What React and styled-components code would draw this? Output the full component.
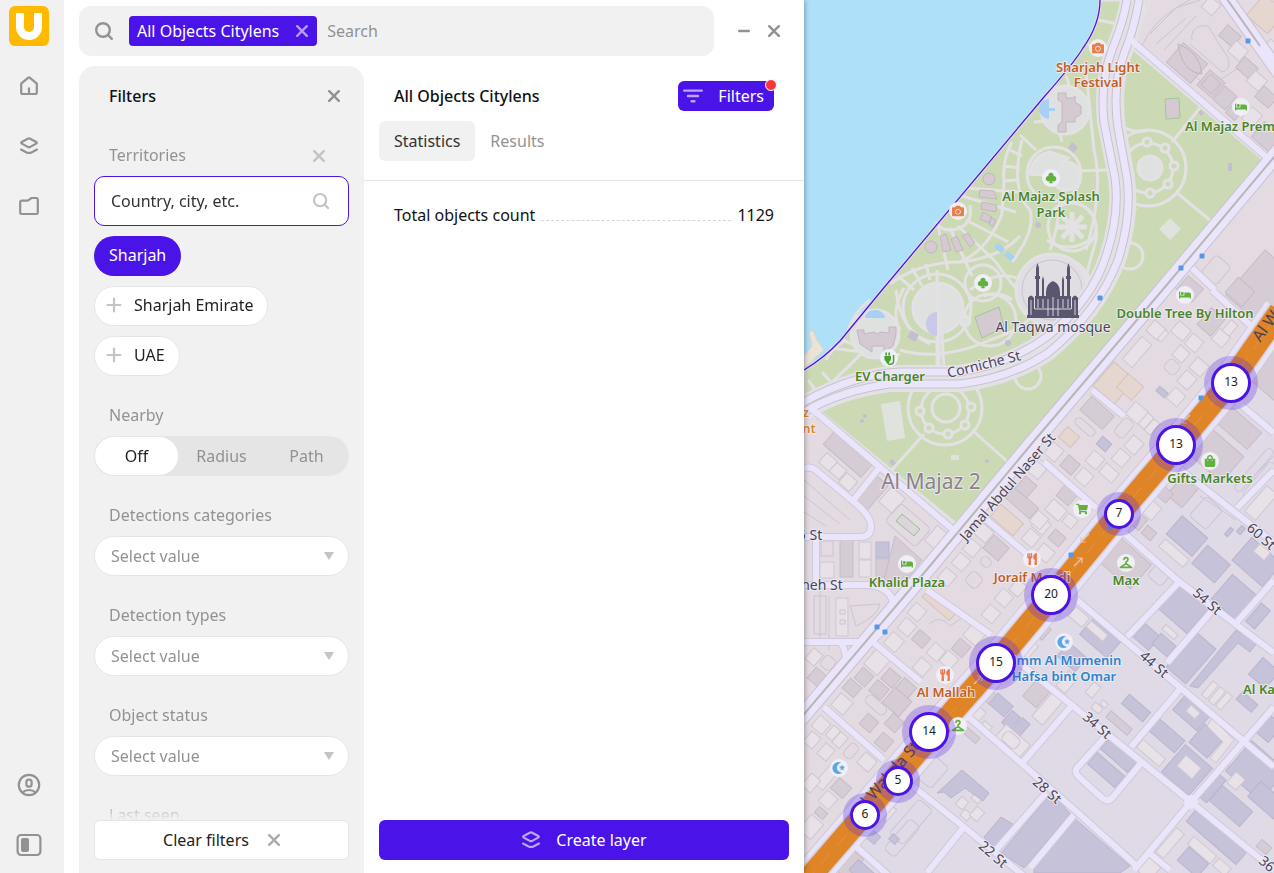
import React from "react";
import styled, { createGlobalStyle } from "styled-components";
import { FaBed, FaCamera, FaShoppingBag, FaShoppingCart, FaUtensils } from "react-icons/fa";
import { BsSuitClubFill } from "react-icons/bs";

const purple = "#4a14e8";
const gray = "#929292";
const ANGLE = -49;

// ---------- icons ----------

const Cross = ({ color = gray, size = 12, width = 2.4 }) => (
  <svg width={size} height={size} viewBox="0 0 12 12" fill="none" stroke={color} strokeWidth={width} strokeLinecap="round">
    <path d="M1.2 1.2 10.8 10.8M10.8 1.2 1.2 10.8" />
  </svg>
);

const Minus = () => (
  <svg width="12" height="12" viewBox="0 0 12 12" stroke={gray} strokeWidth="2.4" strokeLinecap="round">
    <path d="M1.2 6H10.8" />
  </svg>
);

const Plus = () => (
  <svg width="16" height="16" viewBox="0 0 16 16" stroke="#c4c4c4" strokeWidth="2.2" strokeLinecap="round">
    <path d="M1.500 8H14.500M8 1.500V14.500" />
  </svg>
);

const Magnifier = ({ color = gray, size = 20, width = 2.4 }) => (
  <svg width={size} height={size} viewBox="0 0 20 20" fill="none" stroke={color} strokeWidth={width} strokeLinecap="round">
    <circle cx="9" cy="9" r="6.8" />
    <path d="M14 14 17.8 17.8" />
  </svg>
);

const HomeIcon = () => (
  <svg width="20" height="20" viewBox="0 0 20 20" fill="none" stroke={gray} strokeWidth="2.2" strokeLinejoin="round">
    <path d="M2.2 7.6 9 1.8Q10 1 11 1.8L17.8 7.6V16.5Q17.8 18 16.3 18H3.7Q2.2 18 2.2 16.5ZM10 11.5V18" />
  </svg>
);

const LayersIcon = ({ color = gray }) => (
  <svg width="20" height="20" viewBox="0 0 20 20" fill="none" stroke={color} strokeWidth="2.2" strokeLinejoin="round" strokeLinecap="round">
    <path d="M8.8 2.7Q10 2.1 11.2 2.7L17.2 6Q18.4 6.8 17.2 7.6L11.2 10.9Q10 11.5 8.8 10.9L2.8 7.6Q1.6 6.8 2.8 6ZM2 13.600 7.6 16.400Q10 17.500 12.4 16.400L18 13.600" />
  </svg>
);

const FolderIcon = () => (
  <svg width="20" height="20" viewBox="0 0 20 20" fill="none" stroke={gray} strokeWidth="2.2" strokeLinejoin="round">
    <path d="M3 4.6H8.6L12.6 2H17.6Q18.8 2 18.8 3.4V16.6Q18.8 18 17.6 18H2.4Q1.200 18 1.200 16.6V6.6Q1.200 4.6 3 4.6Z" />
  </svg>
);

const UserIcon = () => (
  <svg width="24" height="24" viewBox="0 0 24 24" fill="none" stroke={gray} strokeWidth="2.2">
    <circle cx="12" cy="12" r="10.2" />
    <rect x="9.4" y="6.6" width="5.2" height="7" rx="2.4" />
    <path d="M5.4 19.6Q8 17 12 17T18.6 19.6" />
  </svg>
);

const PanelIcon = () => (
  <svg width="26" height="24" viewBox="0 0 26 24" fill="none" stroke={gray} strokeWidth="2.2">
    <rect x="1.6" y="2" width="22.8" height="20" rx="3.5" />
    <rect x="5" y="5" width="8" height="14" rx="2" fill={gray} stroke="none" />
  </svg>
);

const FunnelLines = () => (
  <svg width="20" height="14" viewBox="0 0 20 14" stroke="#bda6f7" strokeWidth="2.4" strokeLinecap="round">
    <path d="M1.2 1.6H18.8M5 7H15M8.6 12.2H11.4" />
  </svg>
);

const DownArrow = () => (
  <svg width="10" height="8" viewBox="0 0 10 8" fill="#c4c4c4">
    <path d="M0 0H10L5 8Z" />
  </svg>
);

// ---------- map data ----------

const COAST = "M1100 0Q1100 24 1083 48Q1074 63 1044 97L882 290L840 341Q824 358 804 370";

const tones = {
  p: ["#d6ccd5", "#c6bdc8"],
  l: ["#e8e1e8", "#cfc7d1"],
  v: ["#c6c2d9", "#b9b5ce"],
  o: ["#e6d6d0", "#d4c2bd"],
  n: ["none", "#cbc4d2"],
};

// centre x, centre y, length along the avenue, depth, tone
const buildings = [
  [1211, 6, 14, 14, "l"], [1230, 36, 14, 18, "p"], [1238, 51, 14, 16, "l"], [1247, 68, 14, 18, "p"], [1257, 81, 14, 16, "l"],
  [1266, 97, 14, 18, "p"], [1187, 63, 26, 32, "p"], [1211, 84, 20, 20, "p"], [1211, 84, 14, 14, "p"], [1225, 98, 18, 16, "p"],
  [1267, 137, 20, 24, "p"], [1252, 117, 16, 14, "l"], [1266, 14, 28, 28, "o"], [1234, 112, 12, 12, "p"], [1272, 48, 12, 14, "l"],
  [1216, 270, 24, 20, "n"], [1190, 289, 18, 20, "p"], [1262, 287, 60, 44, "p"], [1240, 292, 20, 22, "p"],
  [1211, 322, 22, 18, "p"], [1221, 338, 14, 14, "l"], [1230, 328, 14, 9, "l"], [1181, 331, 14, 16, "l"], [1194, 343, 14, 14, "l"],
  [1181, 354, 13, 13, "l"], [1199, 367, 14, 15, "l"], [1187, 380, 15, 14, "l"], [1172, 367, 13, 14, "n"], [1176, 397, 14, 14, "l"],
  [1162, 392, 6, 11, "v"], [1156, 330, 14, 15, "l"], [1163, 336, 12, 5, "l"], [1137, 352, 30, 13, "l"], [1114, 383, 32, 28, "o"],
  [1130, 387, 18, 20, "o"], [1097, 413, 18, 30, "p"], [1124, 428, 20, 12, "n"], [1085, 427, 8, 24, "n"], [1069, 437, 14, 16, "o"],
  [1104, 444, 10, 12, "v"], [1137, 413, 16, 17, "l"], [1146, 421, 15, 8, "l"], [1152, 427, 15, 8, "l"], [1134, 445, 15, 14, "l"],
  [1121, 458, 14, 14, "l"], [1095, 460, 14, 14, "l"], [1109, 473, 12, 17, "l"], [1084, 477, 14, 14, "l"], [1054, 452, 15, 14, "l"],
  [1070, 465, 14, 15, "p"], [1039, 468, 14, 14, "l"], [1067, 495, 15, 16, "p"], [1056, 510, 14, 18, "l"], [1070, 521, 11, 12, "l"],
  [1041, 525, 14, 15, "l"], [1057, 538, 12, 14, "p"], [1045, 553, 14, 15, "l"],
  [1275, 372, 44, 36, "p"], [1237, 426, 22, 46, "p"], [1216, 455, 34, 44, "p"], [1254, 470, 54, 8, "n"], [1259, 480, 44, 8, "n"],
  [1261, 503, 34, 14, "l"], [1184, 490, 30, 20, "p"], [1162, 492, 12, 20, "p"], [1206, 513, 26, 22, "n"], [1149, 508, 16, 20, "l"],
  [1137, 520, 14, 16, "p"], [1149, 533, 10, 12, "p"], [1125, 563, 32, 42, "p"], [1187, 536, 24, 34, "v"], [1174, 553, 10, 32, "l"],
  [1211, 564, 24, 30, "v"], [1257, 562, 30, 40, "v"], [1262, 552, 10, 14, "l"], [1159, 575, 16, 18, "n"], [1229, 532, 9, 4, "v"], [1241, 530, 8, 5, "v"],
  [1184, 607, 36, 40, "v"], [1147, 637, 18, 20, "v"], [1164, 645, 14, 20, "v"], [1170, 632, 6, 16, "l"], [1234, 597, 32, 32, "v"],
  [1258, 616, 24, 12, "v"], [1191, 658, 46, 26, "v"], [1264, 673, 22, 22, "v"], [1247, 702, 10, 20, "v"], [1101, 637, 24, 36, "v"],
  [1097, 631, 8, 22, "l"], [1079, 617, 12, 18, "l"], [1041, 630, 14, 15, "p"], [1072, 657, 18, 24, "v"], [1067, 682, 20, 12, "l"],
  [1093, 690, 14, 9, "l"], [1097, 708, 7, 10, "l"], [1104, 704, 5, 7, "l"], [1136, 708, 12, 28, "v"], [1119, 723, 8, 28, "p"],
  [1049, 707, 36, 14, "l"], [1038, 692, 26, 18, "p"], [1210, 690, 18, 7, "l"], [1217, 696, 18, 7, "l"], [1224, 701, 18, 7, "l"],
  [1192, 712, 22, 32, "v"], [1193, 712, 8, 12, "l"], [1166, 735, 16, 36, "v"], [1206, 741, 24, 24, "v"], [1151, 753, 10, 30, "l"],
  [1187, 770, 36, 36, "v"], [1189, 767, 14, 20, "l"], [1119, 755, 15, 36, "v"], [1106, 770, 15, 36, "v"], [1239, 758, 26, 9, "l"],
  [1256, 771, 40, 46, "v"], [1236, 781, 14, 12, "l"], [1211, 787, 30, 14, "v"], [1231, 806, 20, 40, "v"], [1267, 800, 20, 34, "v"],
  [1267, 727, 22, 22, "v"], [1217, 836, 18, 66, "v"], [1170, 843, 32, 10, "l"], [1202, 850, 10, 30, "l"], [1193, 862, 18, 26, "v"],
  [1222, 867, 10, 16, "l"], [1264, 847, 9, 13, "p"], [1149, 869, 18, 16, "l"],
  [917, 612, 14, 14, "l"], [907, 627, 14, 14, "l"], [921, 639, 13, 14, "p"], [894, 642, 15, 15, "l"], [939, 605, 10, 36, "o"],
  [936, 652, 14, 14, "l"], [922, 667, 14, 14, "l"], [961, 648, 14, 14, "p"], [974, 635, 15, 17, "l"], [949, 660, 14, 14, "l"],
  [1004, 598, 14, 14, "l"], [991, 614, 14, 14, "l"], [1018, 588, 14, 12, "l"], [877, 662, 20, 18, "l"], [864, 677, 14, 14, "p"],
  [891, 678, 14, 15, "p"], [879, 690, 14, 15, "p"], [852, 688, 13, 15, "p"], [842, 704, 16, 16, "l"], [906, 688, 14, 16, "p"],
  [897, 702, 20, 22, "p"], [869, 723, 14, 14, "p"], [894, 723, 14, 14, "p"], [884, 742, 14, 14, "p"], [821, 725, 14, 14, "l"],
  [833, 733, 13, 9, "l"], [840, 740, 14, 10, "l"], [812, 740, 14, 12, "l"], [826, 752, 14, 12, "l"], [867, 762, 14, 15, "l"],
  [851, 751, 16, 10, "n"], [876, 705, 10, 24, "n"], [827, 777, 26, 11, "l"], [841, 788, 14, 16, "p"], [828, 800, 14, 14, "l"],
  [811, 783, 16, 12, "l"], [821, 813, 8, 11, "p"], [811, 827, 20, 16, "l"], [817, 677, 14, 14, "p"], [828, 663, 13, 13, "n"], [814, 657, 14, 12, "l"],
  [1031, 632, 14, 14, "p"], [1028, 648, 16, 14, "l"], [1001, 705, 14, 20, "v"], [1011, 720, 16, 11, "v"], [1021, 727, 16, 10, "v"],
  [976, 713, 14, 15, "l"], [971, 735, 7, 18, "p"], [986, 727, 8, 10, "l"], [1011, 743, 22, 32, "l"], [1011, 740, 12, 18, "n"], [987, 695, 12, 14, "p"],
  [977, 798, 8, 9, "l"], [962, 803, 10, 9, "l"], [966, 815, 8, 9, "l"], [977, 814, 12, 10, "l"], [911, 822, 46, 18, "n"], [902, 838, 40, 14, "n"],
  [930, 770, 28, 26, "n"], [847, 862, 26, 22, "p"], [894, 839, 7, 8, "v"], [872, 836, 10, 14, "v"], [887, 812, 16, 12, "l"], [862, 872, 14, 22, "v"],
  [848, 454, 18, 50, "p"], [828, 462, 13, 14, "l"], [838, 471, 12, 13, "l"], [848, 482, 13, 14, "l"], [871, 492, 32, 18, "p"],
  [892, 500, 20, 18, "l"], [937, 538, 20, 16, "l"], [908, 525, 24, 40, "n"],
  [1007, 520, 16, 30, "o"], [1022, 503, 14, 32, "p"], [1026, 487, 16, 15, "p"], [1037, 470, 14, 14, "l"], [984, 533, 14, 15, "l"],
  [996, 548, 17, 20, "p"], [972, 548, 14, 14, "l"], [961, 562, 14, 14, "l"], [947, 577, 14, 14, "l"], [1031, 538, 14, 14, "l"],
  [1039, 520, 14, 14, "l"], [986, 562, 9, 11, "n"], [974, 580, 14, 14, "n"],
];

// blocks that line up with the screen: x, y, width, height, tone
const uprights = [
  [840, 540, 13, 37, "p"], [859, 542, 12, 17, "l"], [859, 560, 12, 17, "l"], [876, 542, 13, 16, "v"], [876, 559, 13, 18, "p"],
  [821, 541, 12, 15, "n"], [820, 562, 14, 16, "l"], [836, 598, 12, 38, "l"], [814, 596, 12, 38, "n"], [840, 610, 5, 4, "n"], [840, 620, 5, 4, "n"],
];

const industrial = [
  "1190,686 1236,630 1257,643 1250,652 1238,643 1198,688",
  "937,793 962,770 989,793 983,801 965,788 951,798 944,792",
  "984,837 1001,817 1016,826 996,850",
  "1001,853 1052,792 1070,814 1024,868",
  "1074,818 1130,866 1120,873 1034,873 1034,866",
];

const streets = [
  "M1131 40 1272 162", "M811 408 958 534", "M987 520 1034 560", "M804 468Q812 466 818 472L854 502Q871 516 871 526Q871 537 860 537H804",
  "M852 502 879 468", "M816 540V582", "M804 585H870Q893 588 894 608", "M804 642H871L884 630", "M841 643Q846 650 846 662",
  "M874 643 921 682", "M824 707 884 760", "M927 590 991 635", "M1092 390 1124 416", "M1044 462 1096 508", "M1212 290 1250 325",
  "M1181 470 1274 543", "M1241 405 1274 433", "M1237 508 1274 470", "M1124 533 1177 580 1274 653", "M1077 600 1274 767",
  "M1010 655 1191 802 1274 870", "M964 713 1077 812 1139 868", "M914 787 964 827 1024 876", "M851 842 889 876",
  "M1127 637 1181 580", "M1167 663 1211 612", "M1237 622 1274 580", "M1131 747 1181 688", "M1274 707 1191 802 1134 870",
  "M1074 703 1023 762", "M1074 815 1030 868", "M1104 738 1077 768Q1074 772 1078 776L1102 798Q1108 803 1113 797L1142 762",
  "M1046 793 996 850", "M964 827 927 873", "M1149 853 1170 870", "M1192 268 1215 290",
];

const cornicheWest = "M1127 0Q1124 20 1112 50Q1100 82 1104 122L1115 178Q1120 215 1106 256Q1092 300 1048 336Q1010 364 960 372H900Q852 375 804 402";
const cornicheEast = "M1139 0Q1134 30 1124 54Q1112 86 1118 128L1127 178Q1132 216 1118 260Q1098 312 1048 353Q1010 378 960 384H890Q842 390 804 412";
const jamal = "M1280 150 1165 287 1034 441 924 573 800 719";
const wahda = "M790 900 865 813 932 735 996 663 1051 597 1119 514 1176 447 1231 381 1280 311";

const parkPaths = [
  "M1098 20 1118 24", "M1088 44 1112 62", "M1066 76Q1070 84 1068 92", "M1085 62Q1090 110 1094 150Q1104 190 1086 250",
  "M1020 135 1036 150M1034 122Q1058 118 1062 142M1012 142Q1002 160 1004 182L1002 214Q988 250 960 262",
  "M1022 140Q1010 190 1030 210Q1036 230 1012 262", "M966 188 1018 192M962 196 1016 212M966 220 1008 242M950 228 972 276M938 226 948 270M958 226 996 262",
  "M970 205Q974 228 950 230Q940 230 936 222", "M890 284Q920 262 960 262Q1000 258 1020 236", "M1010 150 1022 156M1004 166 1020 168M1003 181 1018 180",
  "M898 276 914 290M912 268 922 286M926 264 930 280", "M1034 172 1110 170", "M1060 200Q1058 230 1050 250", "M1074 202Q1100 210 1096 240L1086 276",
  "M830 348 862 352Q860 356 832 382M822 372 836 388M808 380 820 396M842 340 858 346", "M900 350Q940 362 990 340Q1020 330 1030 318M896 290Q900 330 930 344",
  "M937 270V282M942 334 944 370M904 288Q890 312 900 330", "M970 290Q1000 268 1020 280M1012 300Q1000 290 984 296M996 262Q1008 280 1016 288",
  "M1172 142 1200 108M1176 192 1211 221M1126 128Q1136 134 1148 130M1136 208 1128 220", "M924 434 890 472M972 430 1008 462",
  "M1050 214Q1064 196 1078 204M1047 240Q1070 256 1096 236M1060 256Q1084 262 1090 280",
  "M860 346Q880 362 900 354M846 340Q830 350 826 360M870 300Q856 310 848 330",
];

const knots = [
  [1147, 142], [1165, 148], [1174, 166], [1168, 184], [1150, 193], [920, 411], [929, 428], [948, 434], [965, 425], [971, 407],
];

const stops = [[1248, 41], [1202, 256], [1181, 268], [1100, 298], [1201, 398], [1110, 527], [1071, 555], [877, 627], [885, 632]];

const green = "#62b13c";
const pois = [
  [1098, 48, FaCamera, "#e8804c"], [958, 211, FaCamera, "#e8804c"],
  [1051, 178, BsSuitClubFill, green], [983, 283, BsSuitClubFill, green],
  [1241, 107, FaBed, green], [1185, 295, FaBed, green], [907, 564, FaBed, green],
  [1032, 559, FaUtensils, "#ea7a4a"], [945, 675, FaUtensils, "#ea7a4a"],
  [1210, 461, FaShoppingBag, green], [1082, 509, FaShoppingCart, green],
];

const food = "#c45f22";
const leaf = "#4a8526";
const street = "#4a4458";
const places = [
  [1098, 72, "Sharjah Light", food], [1098, 87, "Festival", food], [1230, 131, "Al Majaz Prem", leaf],
  [1051, 201, "Al Majaz Splash", leaf], [1051, 217, "Park", leaf], [1185, 318, "Double Tree By Hilton", leaf],
  [890, 381, "EV Charger", leaf], [1210, 483, "Gifts Markets", leaf], [907, 587, "Khalid Plaza", leaf],
  [1126, 585, "Max", leaf], [1032, 582, "Joraif Mandi", food], [946, 697, "Al Mallah", food],
  [1064, 665, "Umm Al Mumenin", "#2b84cc"], [1064, 681, "Hafsa bint Omar", "#2b84cc"], [1259, 694, "Al Ka", leaf],
  [806, 417, "z", "#d98a2b"], [809, 433, "nt", "#d98a2b"],
];

const streetNames = [
  [985, 369, "Corniche St", -14], [1011, 490, "Jamal Abdul Naser St", ANGLE], [1258, 540, "60 St", 41], [1204, 605, "54 St", 41],
  [1151, 668, "44 St", 41], [1094, 729, "34 St", 41], [1044, 794, "28 St", 41], [990, 858, "22 St", 41], [1270, 873, "36 St", 41],
  [810, 540, "5 St", 0], [822, 590, "neh St", 0], [891, 781, "Al Wahda St", ANGLE, true], [1281, 314, "Al Wahda", -54, true],
];

const clusters = [[1231, 383, 13], [1176, 445, 13], [1119, 514, 7], [1051, 595, 20], [996, 663, 15], [929, 732, 14], [898, 781, 5], [865, 815, 6]];

const MAP_LEFT = 804;

const Hanger = ({ x, y }) => (
  <g transform={`translate(${x} ${y})`} fill="none" stroke={green} strokeWidth="1.6" strokeLinecap="round" strokeLinejoin="round">
    <path d="M-2-3.5Q-2-5.4 0-5.4T2-3.4Q2-2 0-1V.6L-5.6 4.4H5.6L0 .6" />
  </g>
);

const Crescent = ({ x, y }) => (
  <g transform={`translate(${x} ${y})`} fill="#5aa6ea">
    <path d="M2.2-5.2A6 6 0 1 0 3.4 4.6A4.8 4.8 0 1 1 2.2-5.2Z" />
    <path d="M3-3.6 3.9-1.4 6.2-1.3 4.4.2 5 2.4 3 1.2 1.2 2.4 1.8.2 0-1.3 2.2-1.4Z" />
  </g>
);

const ChargerPlug = ({ x, y }) => (
  <g transform={`translate(${x} ${y})`}>
    <path d="M-4.6-2H2V1Q2 3 .2 3.4V5H-2.8V3.4Q-4.6 3-4.6 1ZM-3.6-5.4H-2V-2.6H-3.6ZM-.6-5.4H1V-2.6H-.6Z" fill="#4aa02a" />
    <path d="M-1.2 4.6Q-1.2 6.4 1.2 6.2Q4.6 6.2 4.6 3V-3" fill="none" stroke="#4aa02a" strokeWidth="1.4" />
  </g>
);

const Mosque = () => (
  <g fill="#5b5670">
    <path d="M1036 268 1037.5 263 1039 268V276H1040V279H1039V296H1036V279H1035V276H1036ZM1067 268 1068.5 263 1070 268V276H1071V279H1070V296H1067V279H1066V276H1067Z" />
    <path d="M1042 280 1043 276 1044 280V300H1042ZM1062 280 1063 276 1064 280V300H1062ZM1046 292Q1046 284 1053 281Q1060 284 1060 292V300H1046Z" />
    <path d="M1028 298Q1031 293 1034 298V316H1028ZM1072 298Q1075 293 1078 298V316H1072ZM1035 296H1071V310H1035ZM1034 309H1072V317H1034Z" />
    <path d="M1027 315H1079V318H1027Z" />
    <path d="M1031 300V315M1038 299V308M1043 299V308M1048 299V316M1053 297V316M1058 299V316M1063 299V308M1068 299V308M1075 300V315M1035 309H1071" stroke="#d8d3df" strokeWidth="1" fill="none" />
  </g>
);

const Park = () => (
  <g>
    <path d="M1100 0Q1100 24 1083 48Q1074 63 1044 97L882 290L840 341Q824 358 804 370V400L818 410 956 524 1264 160 1132 48 1150 0Z" fill="#cbdab4" stroke="#e4e0e6" strokeWidth="3" />
    <path d="M809 332 813 330 817 340 824 350 812 361 804 368V356L812 346Z" fill="#ebe3d6" stroke="#ddd2c2" />
    <g fill="none" stroke="#e4e1e4" strokeWidth="3">
      {parkPaths.map((d) => <path key={d} d={d} />)}
      <circle cx="1148" cy="168" r="38" />
      <circle cx="945" cy="408" r="37" />
      <circle cx="1130" cy="256" r="13" />
      <circle cx="1028" cy="376" r="13" />
      <circle cx="1054" cy="174" r="27" />
      <circle cx="1072" cy="227" r="24" />
      <circle cx="983" cy="283" r="18" />
      <circle cx="937" cy="308" r="34" />
      <circle cx="990" cy="320" r="26" />
      <circle cx="1148" cy="168" r="25" />
      <circle cx="945" cy="410" r="24" />
      <path d="M1072 212V242M1057 227H1087M1062 216 1083 238M1083 216 1062 238" strokeWidth="5" />
    </g>
    <g fill="#dfe1e0" stroke="#e4e1e4" strokeWidth="3">
      <circle cx="1065" cy="110" r="24" />
      <circle cx="875" cy="334" r="24" />
      <circle cx="938" cy="308" r="25" />
      <circle cx="1150" cy="168" r="12" />
      <circle cx="1066" cy="176" r="14" />
      <path d="M1030 174Q1032 156 1050 152L1068 158 1060 166 1056 176Z" />
      <circle cx="1052" cy="290" r="36" fill="#e0dde3" />
      <circle cx="965" cy="321" r="5" />
    </g>
    <circle cx="1052" cy="290" r="30" fill="none" stroke="#c9c3cf" />
    <path d="M938 282V370" stroke="#e4e1e4" strokeWidth="5" />
    <circle cx="946" cy="408" r="14" fill="#cbdab4" stroke="#e4e1e4" strokeWidth="3" />
    {knots.map(([x, y]) => <circle key={x + "-" + y} cx={x} cy={y} r="4" fill="#cbdab4" stroke="#e4e1e4" strokeWidth="3" />)}
    <path d="M937 312A11 12 0 0 0 937 336Z" fill="#cac8e8" />
    <path d="M1049 99A10 10 0 0 0 1049 119V111H1055V108H1049ZM865 318A10 8 0 0 1 885 318Z" fill="#a8cff5" />
    <path d="M994 247 998 243 1005 249 1001 253ZM1004 255 1008 251 1015 257 1011 261Z" fill="#a8cff5" />
    <g fill="#d5c9d2" stroke="#c3b6c1">
      <path d="M1058 93H1066V98H1073L1075 96V102L1081 106V114L1075 118V122H1066V132H1058V125L1062 122V102L1058 100Z" />
      <path d="M857 330H864V334L874 332 877 334 881 332 889 333V327H896V334L893 346 884 352V346H872V352L860 344Z" />
      <circle cx="989" cy="179" r="6" />
      <circle cx="931" cy="247" r="6" />
      <path d="M980 190 994 191 997 199 979 197ZM982 202 997 205 996 212 981 209ZM983 212 992 217 989 223 980 219ZM940 236 946 234 951 250 943 252ZM951 239 957 236 963 250 956 252ZM962 236 968 233 975 243 970 247ZM991 218 996 220 993 227 989 224Z" />
      <path d="M975 317 999 307 1004 327 982 338Z" stroke="#9fc79a" />
      <path d="M1165 99 1179 98 1180 118 1166 119Z" stroke="#9fc79a" />
    </g>
    <path d="M881 404 900 401 905 438 887 441ZM1170 218 1181 229 1170 240 1159 229ZM951 455H959V460H951Z" fill="#dfe2dd" />
    <path d="M1072 142 1078 147 1074 153 1068 148ZM911 330 919 335 915 342 907 337ZM1228 163H1232V171H1228ZM1201 110 1204 113 1201 116 1198 112ZM892 459 896 463 893 466 889 462Z" fill="#c3bfce" />
    <g fill="#c3bfce">
      <circle cx="1038" cy="225" r="3" />
      <circle cx="865" cy="416" r="2" />
      <circle cx="862" cy="421" r="2" />
      <circle cx="987" cy="461" r="2" />
      <circle cx="1008" cy="343" r="3" />
    </g>
  </g>
);

const CityMap = () => (
  <MapArt role="img" aria-label="Map of Sharjah">
    <g transform={`translate(${-MAP_LEFT} 0)`}>
      <rect x="804" width="3000" height="2000" fill="#e4dbe2" />
      <path d="M790 900 1280 311H3000V2000H790Z" fill="#dfdae6" />
      <path d={COAST + "V0Z"} fill="#afe0f9" />
      <Park />
      <g fill="none" stroke="#cbc5d2">
        <path d="M1140 52Q1150 20 1190 0M1150 34 1176 8 1200 0M1156 44 1186 18M1164 50 1196 16M1192 40Q1190 30 1200 26H1208L1228 58Q1232 70 1222 72L1190 44M1220 80 1250 60M1180 62 1232 110" />
        <path d="M804 480 850 520M804 496 840 524M804 512 826 526M850 606 880 604Q878 616 856 626ZM929 624Q940 614 950 626L968 614M820 590V640M829 596V650" />
        <path d="M1250 480 1274 456M1200 496 1236 520" />
      </g>
      {buildings.map(([x, y, w, h, tone], i) => (
        <rect key={i} x={x - w / 2} y={y - h / 2} width={w} height={h} rx={tone === "n" ? 4 : 0} fill={tones[tone][0]} stroke={tones[tone][1]} transform={`rotate(${ANGLE} ${x} ${y})`} />
      ))}
      {uprights.map(([x, y, w, h, tone], i) => (
        <rect key={i} x={x} y={y} width={w} height={h} fill={tones[tone][0]} stroke={tones[tone][1]} />
      ))}
      {industrial.map((points) => <polygon key={points} points={points} fill={tones.v[0]} stroke={tones.v[1]} />)}
      <path d="M1178 44Q1200 52 1202 74Q1182 72 1178 44Z" fill="none" stroke="#bfb5bf" />
      <path d="M895 536 922 560 906 580H884Z" fill={tones.p[0]} stroke={tones.p[1]} />
      <path d="M902 514 920 529 914 536 896 521Z" fill="#dcd6dc" stroke="#94bf90" />
      <path d="M1212 718 1234 740 1216 763 1210 758 1223 742 1207 726Z" fill="#e8e1e8" stroke="#cfc7d1" />

      <g fill="none" strokeLinejoin="round">
        {streets.map((d) => <path key={d} d={d} stroke="#cfc9d9" strokeWidth="8" />)}
        <path d={jamal} stroke="#c8c2d2" strokeWidth="17" />
        <path d="M1222 -8 1280 74" stroke="#c8c2d2" strokeWidth="15" />
        <path d={cornicheWest} stroke="#e4e0e8" strokeWidth="14" />
        <path d={cornicheEast} stroke="#e4e0e8" strokeWidth="16" />
        <path d={cornicheWest} stroke="#c6c3c8" strokeWidth="9" />
        <path d={cornicheEast} stroke="#c6c3c8" strokeWidth="9" />
        <path d={wahda} stroke="#cfc9d9" strokeWidth="36" />
        {streets.map((d) => <path key={d} d={d} stroke="#eae5fa" strokeWidth="6" />)}
        <path d={cornicheWest} stroke="#eae5fb" strokeWidth="7" />
        <path d={cornicheEast} stroke="#eae5fb" strokeWidth="7" />
        <path d={jamal} stroke="#eae5fa" strokeWidth="15" />
        <path d={jamal} stroke="#b9b5b8" strokeWidth="2" />
        <path d="M1222 -8 1280 74" stroke="#eae5fa" strokeWidth="13" />
        <path d="M1222 -8 1260 46" stroke="#b9b5b8" strokeWidth="2" />
        <path d={wahda} stroke="#e8e3f6" strokeWidth="34" />
        <path d={wahda} stroke="#d5cedd" strokeWidth="25" />
        <path d={wahda} stroke="#df8527" strokeWidth="22" />
        <path d={wahda} stroke="#e39345" strokeWidth="1" strokeDasharray="14 10" />
        <path d={COAST} stroke={purple} strokeWidth="1.3" />
      </g>
      <circle cx="1191" cy="802" r="7" fill="#eae5fa" />
      <g stroke="#ecc4a4" fill="none" strokeWidth="1.2">
        <path d="M1190 415 1182 423M1182 418V423H1187M1089 534 1081 542M1081 537V542H1086M1074 566 1082 558M1077 558H1082V563M974 684 982 676M977 676H982V681" />
      </g>

      <Mosque />
      {stops.map(([x, y]) => <rect key={x + "-" + y} x={x - 2.5} y={y - 2.5} width="5" height="5" rx="1" fill="#5698e6" />)}

      {pois.map(([x, y, Icon, color]) => (
        <g key={x + "-" + y}>
          <circle cx={x} cy={y} r="9" fill="#f0eef6" />
          <Icon x={x - 6} y={y - 6} size={12} color={color} />
        </g>
      ))}
      {[[1126, 563], [958, 726], [1064, 642], [839, 768], [889, 358]].map(([x, y]) => (
        <circle key={x} cx={x} cy={y} r="9" fill="#f0eef6" />
      ))}
      <Hanger x={1126} y={563} />
      <Hanger x={958} y={726} />
      <Crescent x={1064} y={642} />
      <Crescent x={839} y={768} />
      <ChargerPlug x={889} y={358} />

      {places.map(([x, y, name, color]) => (
        <PlaceName key={name} x={x} y={y} fill={color}>{name}</PlaceName>
      ))}
      {streetNames.map(([x, y, name, turn, main]) => (
        <StreetName key={name} x={x} y={y} $main={main} transform={`rotate(${turn} ${x} ${y})`}>{name}</StreetName>
      ))}
      <StreetName x="1053" y="332">Al Taqwa mosque</StreetName>
      <DistrictName x="931" y="489">Al Majaz 2</DistrictName>
    </g>
  </MapArt>
);

// ---------- panels ----------

const SelectField = ({ id, label }) => (
  <Group>
    <GroupLabel htmlFor={id}>{label}</GroupLabel>
    <SelectBox>
      <Select id={id}>
        <option>Select value</option>
      </Select>
      <DownArrow />
    </SelectBox>
  </Group>
);

const FiltersPanel = () => (
  <FiltersColumn>
    <FiltersHead>
      <Title>Filters</Title>
      <HeadButton type="button" aria-label="Close filters"><Cross /></HeadButton>
    </FiltersHead>
    <Scroller>
      <Group>
        <LabelRow>
          <GroupLabel htmlFor="territory">Territories</GroupLabel>
          <IconButton type="button" aria-label="Clear territories"><Cross color="#c4c4c4" /></IconButton>
        </LabelRow>
        <TerritoryBox>
          <TerritoryInput id="territory" placeholder="Country, city, etc." />
          <Magnifier color="#c4c4c4" size={18} />
        </TerritoryBox>
        <Chips>
          <Chip type="button" $active>Sharjah</Chip>
          <Chip type="button"><Plus />Sharjah Emirate</Chip>
          <Chip type="button"><Plus />UAE</Chip>
        </Chips>
      </Group>
      <Group>
        <GroupLabel as="span">Nearby</GroupLabel>
        <Segments role="radiogroup" aria-label="Nearby">
          {["Off", "Radius", "Path"].map((name) => (
            <Segment key={name}>
              <input type="radio" name="nearby" defaultChecked={name === "Off"} />
              <span>{name}</span>
            </Segment>
          ))}
        </Segments>
      </Group>
      <SelectField id="categories" label="Detections categories" />
      <SelectField id="types" label="Detection types" />
      <SelectField id="status" label="Object status" />
      <SelectField id="seen" label="Last seen" />
    </Scroller>
    <ClearButton type="button">Clear filters<Cross color="#ababab" /></ClearButton>
  </FiltersColumn>
);

const Results = () => (
  <ResultsColumn>
    <ResultsHead>
      <Title>All Objects Citylens</Title>
      <FiltersButton type="button"><FunnelLines />Filters<Dot /></FiltersButton>
    </ResultsHead>
    <Tabs role="tablist">
      <Tab type="button" role="tab" aria-selected="true" $active>Statistics</Tab>
      <Tab type="button" role="tab" aria-selected="false">Results</Tab>
    </Tabs>
    <Stats>
      <Stat>
        <dt>Total objects count</dt>
        <Leader />
        <dd>1129</dd>
      </Stat>
    </Stats>
    <CreateButton type="button"><LayersIcon color="#bda6f7" />Create layer</CreateButton>
  </ResultsColumn>
);

export default function App() {
  return (
    <Page>
      <GlobalStyle />
      <Sidebar>
        <Logo href="#" aria-label="Start page"><LogoMark /></Logo>
        <NavLink href="#" aria-label="Home"><HomeIcon /></NavLink>
        <NavLink href="#" aria-label="Layers"><LayersIcon /></NavLink>
        <NavLink href="#" aria-label="Projects"><FolderIcon /></NavLink>
        <Spacer />
        <NavLink href="#" aria-label="Account"><UserIcon /></NavLink>
        <NavLink href="#" aria-label="Toggle panel"><PanelIcon /></NavLink>
      </Sidebar>
      <Panel>
        <TopBar>
          <SearchBox>
            <Magnifier />
            <Tag>
              All Objects Citylens
              <IconButton type="button" aria-label="Remove"><Cross color="#b59bf6" /></IconButton>
            </Tag>
            <SearchInput placeholder="Search" aria-label="Search" />
          </SearchBox>
          <WindowButtons>
            <IconButton type="button" aria-label="Minimize"><Minus /></IconButton>
            <IconButton type="button" aria-label="Close"><Cross /></IconButton>
          </WindowButtons>
        </TopBar>
        <Columns>
          <FiltersPanel />
          <Results />
        </Columns>
      </Panel>
      <MapPane>
        <CityMap />
        {clusters.map(([x, y, count]) => (
          <Cluster key={x} type="button" $small={count < 10} style={{ left: x - MAP_LEFT, top: y }}>{count}</Cluster>
        ))}
      </MapPane>
    </Page>
  );
}

const GlobalStyle = createGlobalStyle`
  * {
    box-sizing: border-box;
  }
  body {
    margin: 0;
    font-family: "Noto Sans", "Open Sans", sans-serif;
    font-size: 16px;
    line-height: 20px;
    color: #222;
  }
  button, input, select {
    font: inherit;
    color: inherit;
    border: none;
    outline: none;
    background: none;
    padding: 0;
    margin: 0;
  }
  svg {
    flex: none;
    display: block;
  }
`

const Page = styled.div`
  display: flex;
  height: 100vh;
  overflow: hidden;
  background: white;
`

const Sidebar = styled.nav`
  flex: 0 0 64px;
  display: flex;
  flex-direction: column;
  gap: 20px;
  padding: 6px 15px 8px 9px;
  background: #f1f1f1;
`

const Logo = styled.a`
  display: flex;
  align-items: center;
  justify-content: center;
  width: 40px;
  height: 40px;
  border-radius: 6px;
  background: #ffba00;
`

const LogoMark = styled.span`
  width: 26px;
  height: 27px;
  border: 8px solid white;
  border-top: none;
  border-radius: 1px 1px 13px 13px;
`

const NavLink = styled.a`
  display: flex;
  align-items: center;
  justify-content: center;
  width: 40px;
  height: 40px;
`

const Spacer = styled.div`
  flex: 1;
`

const Panel = styled.main`
  flex: 0 0 740px;
  display: flex;
  flex-direction: column;
  background: white;
  box-shadow: 0 0 6px rgba(0, 0, 0, 0.4);
  clip-path: inset(0 -8px 0 0);
  z-index: 1;
`

const TopBar = styled.header`
  display: flex;
  align-items: center;
  gap: 15px;
  padding: 6px 15px 10px;
`

const SearchBox = styled.div`
  flex: 1;
  display: flex;
  align-items: center;
  height: 50px;
  padding: 0 15px;
  border-radius: 12px;
  background: #f1f1f1;
`

const Tag = styled.span`
  display: flex;
  align-items: center;
  gap: 8px;
  height: 30px;
  margin: 0 10px 0 15px;
  padding-left: 8px;
  border-radius: 4px;
  background: ${purple};
  color: white;
  white-space: nowrap;
`

const SearchInput = styled.input`
  flex: 1;
  min-width: 0;
  &::placeholder {
    color: ${gray};
  }
`

const WindowButtons = styled.div`
  display: flex;
`

const IconButton = styled.button`
  display: flex;
  align-items: center;
  justify-content: center;
  width: 30px;
  height: 30px;
`

const HeadButton = styled(IconButton)``

const Columns = styled.div`
  flex: 1;
  min-height: 0;
  display: flex;
`

const FiltersColumn = styled.aside`
  flex: 0 0 285px;
  min-width: 0;
  display: flex;
  flex-direction: column;
  margin-left: 15px;
  padding: 10px 15px 13px;
  border-radius: 16px 16px 0 0;
  background: #f1f1f1;
`

const FiltersHead = styled.div`
  display: flex;
  align-items: center;
  justify-content: space-between;
  height: 40px;
  margin-bottom: 20px;
  padding-left: 15px;
`

const Title = styled.h2`
  margin: 0;
  font-size: 16px;
  font-weight: 500;
  color: #111;
`

const Scroller = styled.div`
  flex: 1;
  min-height: 0;
  display: flex;
  flex-direction: column;
  gap: 20px;
  overflow-x: hidden;
  overflow-y: auto;
  scrollbar-width: none;
  mask-image: linear-gradient(black calc(100% - 20px), transparent);
`

const Group = styled.div`
  flex: none;
  display: flex;
  flex-direction: column;
`

const LabelRow = styled.div`
  display: flex;
  align-items: center;
  justify-content: space-between;
  padding-right: 15px;
`

const GroupLabel = styled.label`
  padding: 9px 15px 11px;
  color: ${gray};
`

const TerritoryBox = styled.div`
  display: flex;
  align-items: center;
  height: 50px;
  padding: 0 18px 0 16px;
  border: 1px solid ${purple};
  border-radius: 10px;
  background: white;
`

const TerritoryInput = styled.input`
  flex: 1;
  min-width: 0;
  &::placeholder {
    color: #333;
  }
`

const Chips = styled.div`
  display: flex;
  flex-direction: column;
  align-items: flex-start;
  gap: 10px;
  margin-top: 10px;
`

const Chip = styled.button`
  display: flex;
  align-items: center;
  gap: 12px;
  height: 40px;
  padding: 0 ${(props) => (props.$active ? 15 : 14)}px 2px ${(props) => (props.$active ? 15 : 11)}px;
  border: ${(props) => (props.$active ? "none" : "1px solid #e5e5e5")};
  border-radius: 20px;
  background: ${(props) => (props.$active ? purple : "white")};
  color: ${(props) => (props.$active ? "white" : "#222")};
`

const Segments = styled.div`
  display: grid;
  grid-template-columns: repeat(3, 1fr);
  height: 40px;
  border-radius: 20px;
  background: #e5e5e5;
`

const Segment = styled.label`
  display: flex;
  input {
    appearance: none;
    width: 0;
  }
  span {
    flex: 1;
    display: flex;
    align-items: center;
    justify-content: center;
    border-radius: 20px;
    color: ${gray};
  }
  input:checked + span {
    border: 1px solid #e5e5e5;
    background: white;
    color: #222;
  }
`

const SelectBox = styled.div`
  display: grid;
  align-items: center;
  > * {
    grid-area: 1 / 1;
  }
  svg {
    justify-self: end;
    margin-right: 15px;
    pointer-events: none;
  }
`

const Select = styled.select`
  appearance: none;
  width: 100%;
  height: 40px;
  padding: 0 40px 0 16px;
  border: 1px solid #e5e5e5;
  border-radius: 20px;
  background: white;
  color: ${gray};
`

const ClearButton = styled.button`
  flex: none;
  display: flex;
  align-items: center;
  justify-content: center;
  gap: 19px;
  height: 40px;
  border: 1px solid #e5e5e5;
  border-radius: 6px;
  background: white;
`

const ResultsColumn = styled.section`
  flex: 1;
  min-width: 0;
  display: flex;
  flex-direction: column;
  padding-bottom: 13px;
`

const ResultsHead = styled.div`
  display: flex;
  align-items: center;
  justify-content: space-between;
  padding: 15px 30px 10px;
`

const FiltersButton = styled.button`
  position: relative;
  display: flex;
  align-items: center;
  gap: 15px;
  height: 30px;
  padding: 0 10px 0 5px;
  border-radius: 6px;
  background: ${purple};
  color: white;
`

const Dot = styled.span`
  position: absolute;
  top: -2px;
  right: -3px;
  width: 12px;
  height: 12px;
  border: 1px solid white;
  border-radius: 50%;
  background: #fb3440;
`

const Tabs = styled.div`
  display: flex;
  padding: 0 15px 19px;
  border-bottom: 1px solid #e5e5e5;
`

const Tab = styled.button`
  height: 40px;
  padding: 0 15px;
  border-radius: 6px;
  background: ${(props) => (props.$active ? "#f1f1f1" : "none")};
  color: ${(props) => (props.$active ? "#333" : gray)};
`

const Stats = styled.dl`
  flex: 1;
  margin: 0;
  padding: 24px 30px;
`

const Stat = styled.div`
  display: flex;
  gap: 6px;
  color: #111;
  dd {
    margin: 0;
  }
`

const Leader = styled.span`
  flex: 1;
  height: 16px;
  border-bottom: 1px dashed #d5d5d5;
`

const CreateButton = styled.button`
  display: flex;
  align-items: center;
  justify-content: center;
  gap: 15px;
  height: 40px;
  margin: 0 15px;
  border-radius: 6px;
  background: ${purple};
  color: white;
`

const MapPane = styled.section`
  flex: 1;
  min-width: 0;
  position: relative;
  overflow: hidden;
`

const MapArt = styled.svg`
  width: 100%;
  height: 100%;
`

const MapText = styled.text`
  text-anchor: middle;
  paint-order: stroke;
  stroke: rgba(240, 236, 246, 0.85);
  stroke-width: 2px;
  stroke-linejoin: round;
`

const PlaceName = styled(MapText)`
  font-size: 13px;
  font-weight: 600;
`

const StreetName = styled(MapText)`
  font-size: ${(props) => (props.$main ? 16 : 14)}px;
  fill: ${street};
  stroke-width: ${(props) => (props.$main ? 0 : 2)}px;
`

const DistrictName = styled(MapText)`
  font-size: 21px;
  fill: #8c8289;
`

const Cluster = styled.button`
  position: absolute;
  display: flex;
  align-items: center;
  justify-content: center;
  width: ${(props) => (props.$small ? 30 : 40)}px;
  height: ${(props) => (props.$small ? 30 : 40)}px;
  padding-bottom: 2px;
  transform: translate(-50%, -50%);
  border: 3px solid ${purple};
  border-radius: 50%;
  background: white;
  box-shadow: 0 0 0 7px rgba(91, 41, 225, 0.28);
  font-size: 12px;
`
